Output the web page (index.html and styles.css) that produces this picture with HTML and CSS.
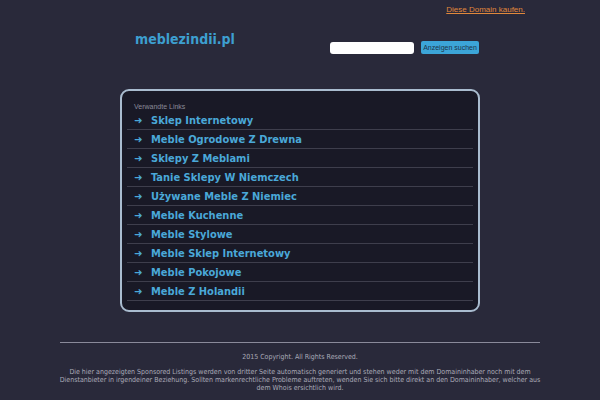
FILE: index.html
```html
<!DOCTYPE html>
<html lang="de">
<head>
<meta charset="utf-8">
<link rel="stylesheet" href="styles.css">
</head>
<body>
<div class="topbar"><a class="buy" href="#">Diese Domain kaufen.</a></div>
<div class="header">
  <div class="domain">meblezindii.pl</div>
  <form class="search">
    <input class="search-input" type="text">
    <button class="search-btn" type="button">Anzeigen suchen</button>
  </form>
</div>
<div class="box">
  <div class="box-title">Verwandte Links</div>
  <ul class="links">
    <li><span class="arrow">&#10140;</span><a href="#">Sklep Internetowy</a></li>
    <li><span class="arrow">&#10140;</span><a href="#">Meble Ogrodowe Z Drewna</a></li>
    <li><span class="arrow">&#10140;</span><a href="#">Sklepy Z Meblami</a></li>
    <li><span class="arrow">&#10140;</span><a href="#">Tanie Sklepy W Niemczech</a></li>
    <li><span class="arrow">&#10140;</span><a href="#">Używane Meble Z Niemiec</a></li>
    <li><span class="arrow">&#10140;</span><a href="#">Meble Kuchenne</a></li>
    <li><span class="arrow">&#10140;</span><a href="#">Meble Stylowe</a></li>
    <li><span class="arrow">&#10140;</span><a href="#">Meble Sklep Internetowy</a></li>
    <li><span class="arrow">&#10140;</span><a href="#">Meble Pokojowe</a></li>
    <li><span class="arrow">&#10140;</span><a href="#">Meble Z Holandii</a></li>
  </ul>
</div>
<div class="footer">
  <p class="copy">2015 Copyright. All Rights Reserved.</p>
  <p class="disclaimer">Die hier angezeigten Sponsored Listings werden von dritter Seite automatisch generiert und stehen weder mit dem Domaininhaber noch mit dem Dienstanbieter in irgendeiner Beziehung. Sollten markenrechtliche Probleme auftreten, wenden Sie sich bitte direkt an den Domaininhaber, welcher aus dem Whois ersichtlich wird.</p>
  <p class="privacy"><a href="#">Privacy Policy</a></p>
</div>
</body>
</html>
```
FILE: styles.css
```css
html, body {
  margin: 0;
  padding: 0;
  background: #29293a;
}
body {
  font-family: "DejaVu Sans Condensed", "DejaVu Sans", sans-serif;
  color: #a9a9b8;
}
.topbar {
  height: 25px;
  display: flex;
  justify-content: flex-end;
  padding-right: 75px;
}
.buy {
  font-family: "Liberation Sans", Arial, sans-serif;
  font-size: 8px;
  color: #e0883c;
  text-decoration: underline;
  margin-top: 5px;
}
.header {
  width: 360px;
  box-sizing: border-box;
  padding: 0 1px 0 15px;
  margin: 0 auto;
  display: flex;
  justify-content: space-between;
  align-items: flex-start;
  height: 64px;
}
.domain {
  font-family: "DejaVu Sans Condensed", "DejaVu Sans", sans-serif;
  font-weight: bold;
  font-size: 14px;
  color: #3d9fd0;
  margin-top: 6px;
}
.search {
  margin: 16px 0 0 0;
  display: flex;
  gap: 7px;
  align-items: center;
}
.search-input {
  width: 84px;
  height: 12px;
  border: none;
  border-radius: 3px;
  background: #fff;
  padding: 0;
  margin: 0;
}
.search-btn {
  font-family: "Liberation Sans", Arial, sans-serif;
  font-size: 7px;
  color: #1d3448;
  background: #3ca5d8;
  border: none;
  border-radius: 2px;
  height: 13px;
  width: 58px;
  padding: 0;
  margin: 0;
}
.box {
  width: 360px;
  height: 223px;
  box-sizing: border-box;
  margin: 0 auto;
  border: 2px solid #a9bccf;
  border-radius: 9px;
  background: #191926;
  padding: 11px 5px 0 5px;
}
.box-title {
  font-family: "Liberation Sans", Arial, sans-serif;
  font-size: 7px;
  color: #8a8a98;
  padding-left: 7px;
  line-height: 9px;
}
.links {
  list-style: none;
  margin: 0;
  padding: 0;
}
.links li {
  height: 18px;
  border-bottom: 1px solid #3e3e4c;
  display: flex;
  align-items: center;
  padding-left: 7px;
}
.arrow {
  color: #4aa8d8;
  font-family: "DejaVu Sans", sans-serif;
  font-size: 10px;
  font-weight: bold;
  width: 17px;
}
.links a {
  font-family: "DejaVu Sans Condensed", "DejaVu Sans", sans-serif;
  font-weight: bold;
  font-size: 11px;
  color: #4aa8d8;
  text-decoration: none;
}
.footer {
  width: 480px;
  margin: 30px auto 0 auto;
  border-top: 1px solid #8a8a9a;
  text-align: center;
  font-size: 7px;
}
.copy {
  margin: 10px 0 0 0;
  line-height: 9px;
}
.disclaimer {
  margin: 7px -8px 0 -8px;
  line-height: 7.8px;
}
.privacy {
  margin: 8px 0 0 0;
  line-height: 9px;
}
.privacy a {
  color: #a9a9b8;
  text-decoration: none;
}
```
